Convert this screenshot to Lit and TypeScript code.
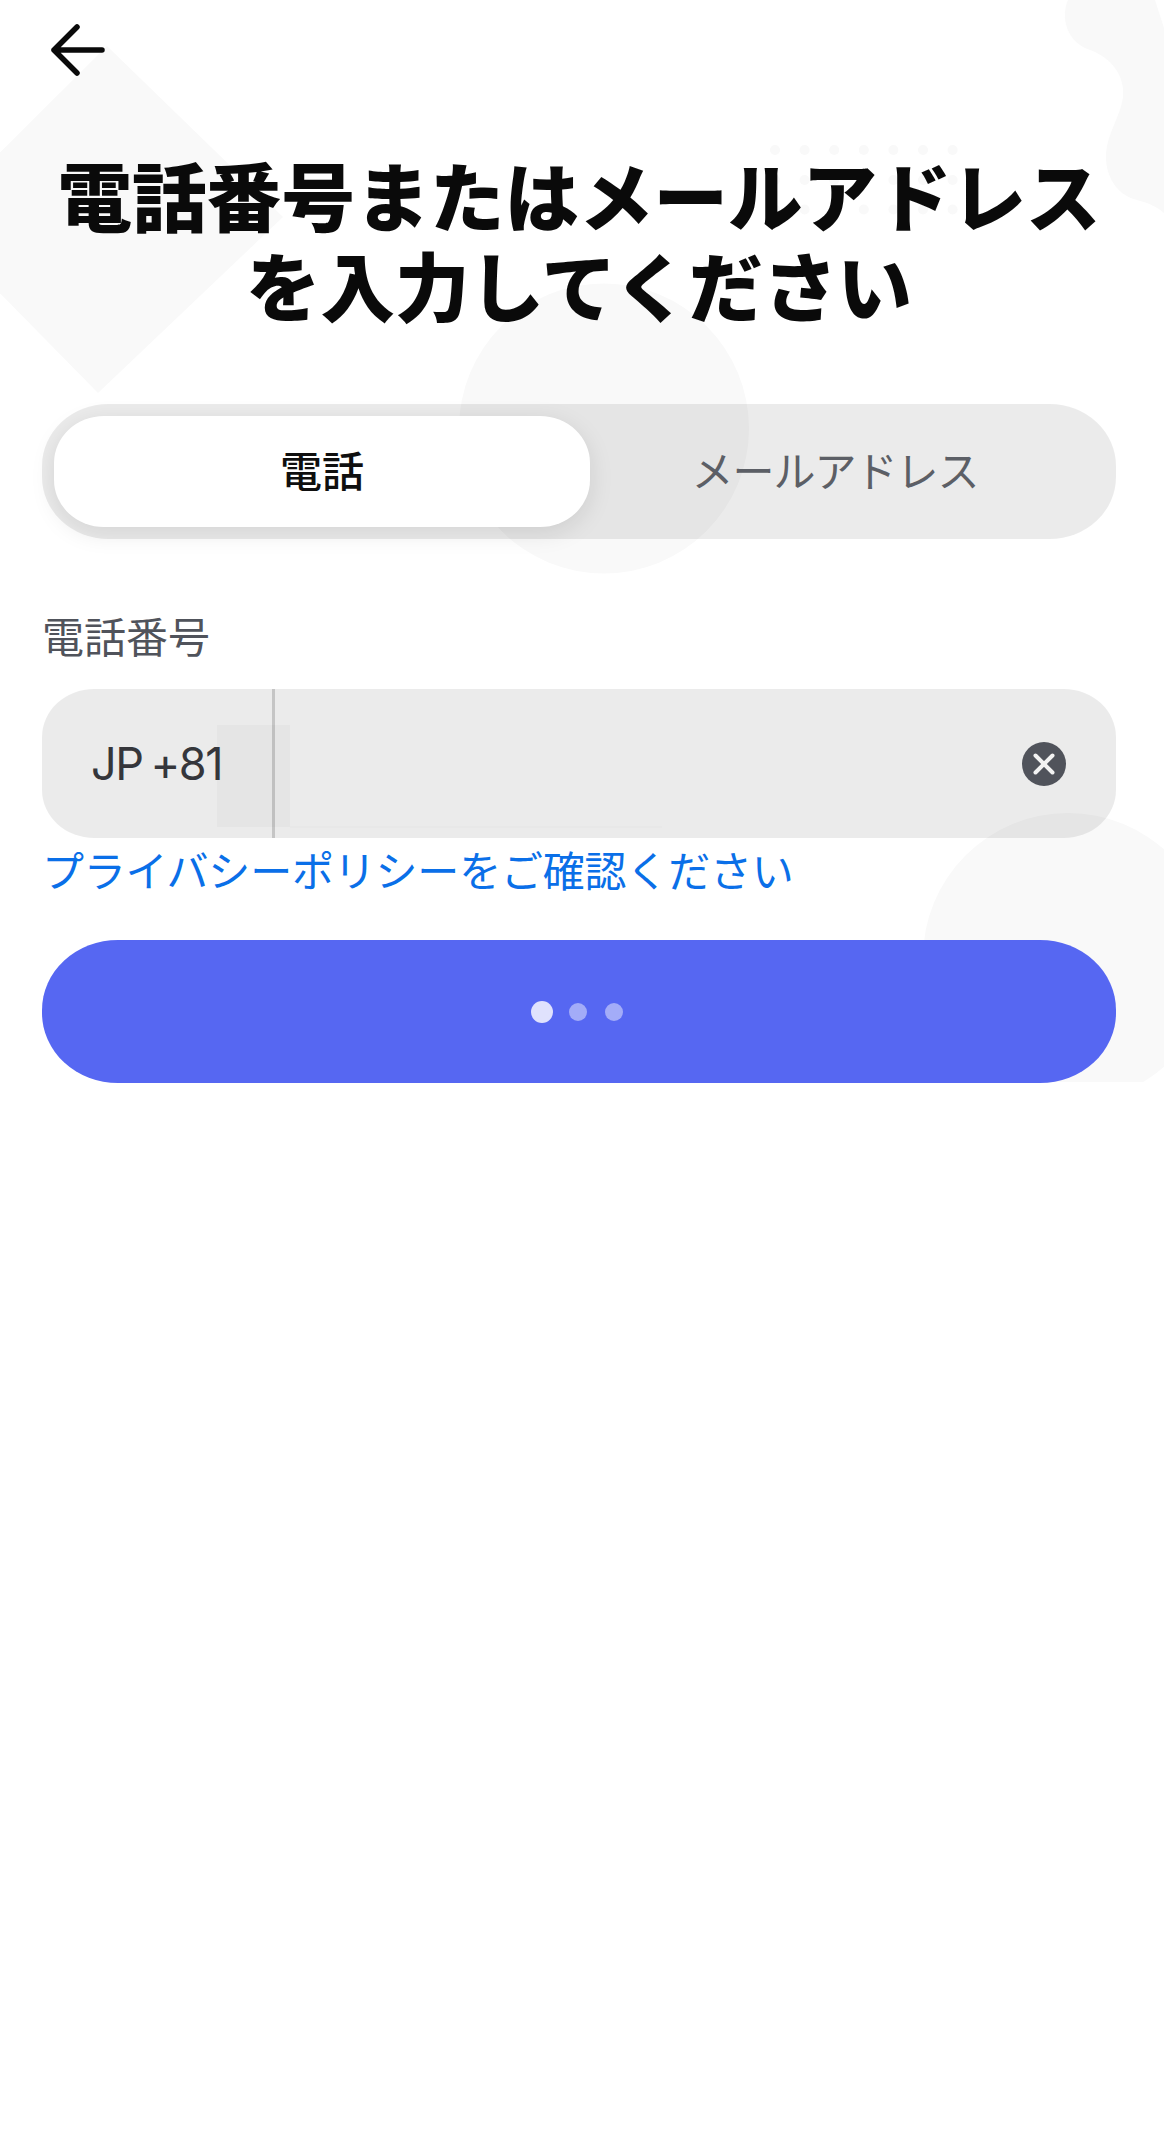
import { LitElement, css, html, svg } from 'lit'
import { customElement, state } from 'lit/decorators.js'

const DOT_COLS = [775, 804.6, 834.2, 863.8, 893.4, 923, 952.6]
const DOT_ROWS = [150, 180, 209.5]

@customElement('app-root')
export class AppRoot extends LitElement {
  @state() private tab: 'phone' | 'email' = 'phone'

  static styles = css`
    :host {
      display: block;
      background: #fff;
      font-family: 'Noto Sans CJK JP', 'Noto Sans', sans-serif;
    }

    .page {
      position: relative;
      min-height: 2149px;
      box-sizing: border-box;
      padding: 18px 48px 0 42px;
    }

    /* decorative shapes sit under the translucent controls */
    .deco {
      position: absolute;
      top: 0;
      left: 0;
      width: 1164px;
      height: 1082px;
    }

    .content {
      position: relative;
    }

    .back {
      display: block;
      width: 64px;
      height: 64px;
      padding: 0;
      border: 0;
      background: none;
    }

    .back svg {
      display: block;
    }

    h1 {
      margin: 67px 0 0;
      font-size: 74.5px;
      line-height: 90px;
      font-weight: 900;
      text-align: center;
      color: #0a0a0a;
    }

    .segment {
      display: flex;
      box-sizing: border-box;
      height: 135px;
      margin-top: 75px;
      padding: 12px 36px 12px 12px;
      border-radius: 66px / 62px;
      background: rgba(0, 0, 0, 0.08);
    }

    .tab {
      display: flex;
      align-items: center;
      justify-content: center;
      padding: 0 0 6px;
      border: 0;
      background: none;
      font: inherit;
      font-size: 42px;
      letter-spacing: -1px;
      color: #5c5f66;
      flex: 1;
    }

    .tab.active {
      flex: 0 0 536px;
      border-radius: 50px / 47px;
      background: #fff;
      color: #0f0f0f;
      font-weight: 500;
      letter-spacing: 0;
      box-shadow: 0 6px 24px rgba(0, 0, 0, 0.1);
    }

    .label {
      margin-top: 71px;
      font-size: 42px;
      line-height: 50px;
      color: #50535b;
    }

    .field {
      display: flex;
      align-items: center;
      height: 149px;
      margin-top: 29px;
      border-radius: 52px / 48px;
      background: rgba(0, 0, 0, 0.08);
    }

    .prefix {
      box-sizing: border-box;
      width: 230px;
      padding-left: 49px;
      font-family: Inter, 'Noto Sans CJK JP', sans-serif;
      font-size: 45px;
      letter-spacing: -1.5px;
      word-spacing: -3px;
      color: #35363b;
    }

    .divider {
      align-self: stretch;
      width: 3px;
      background: rgba(0, 0, 0, 0.16);
    }

    .spacer {
      flex: 1;
    }

    .clear {
      display: block;
      margin-right: 50px;
    }

    .link {
      display: block;
      margin-top: 6px;
      font-size: 42px;
      line-height: 50px;
      letter-spacing: -0.2px;
      color: #0a6fe8;
      text-decoration: none;
    }

    .submit {
      display: flex;
      align-items: center;
      justify-content: center;
      gap: 18px;
      width: 100%;
      height: 143px;
      margin-top: 46px;
      padding: 0;
      border: 0;
      border-radius: 76px / 70px;
      background: #5667f2;
    }

    .dot {
      width: 18px;
      height: 18px;
      border-radius: 50%;
      background: #a3acf8;
    }

    .dot.big {
      width: 22px;
      height: 22px;
      margin-right: -2px;
      margin-left: -4px;
      background: #e0e2fd;
    }
  `

  private renderDeco() {
    return html`
      <svg class="deco" width="1164" height="1082" viewBox="0 0 1164 1082" fill="#f9f9f9">
        <polygon points="107,46 283,217 98,393 -70,222" />
        <circle cx="604" cy="428.500" r="145" />
        <circle cx="1068" cy="958" r="145" />
        <path
          d="M1068 0C1061 16 1065 41 1090 50C1112 58 1125 76 1123 97C1120 118 1106 135 1106 157C1106 180 1120 196 1137 200C1149 203 1157 207 1164 213V28L1155 0Z"
        />
        ${DOT_ROWS.map((cy) =>
          DOT_COLS.map((cx) => svg`<circle cx=${cx} cy=${cy} r="5" />`)
        )}
        <rect x="217" y="725" width="73" height="102" />
        <rect x="290" y="826.500" width="372" height="1" />
      </svg>
    `
  }

  render() {
    return html`
      <div class="page">
        ${this.renderDeco()}
        <div class="content">
          <button class="back" aria-label="戻る">
            <svg width="64" height="64" viewBox="0 0 64 64" fill="none" stroke="#0a0a0a" stroke-width="5.500" stroke-linecap="round" stroke-linejoin="round">
              <path d="M60 32H12M35 9 12 32l23 23" />
            </svg>
          </button>

          <h1>電話番号またはメールアドレスを入力してください</h1>

          <div class="segment">
            <button class="tab ${this.tab === 'phone' ? 'active' : ''}" @click=${() => (this.tab = 'phone')}>電話</button>
            <button class="tab ${this.tab === 'email' ? 'active' : ''}" @click=${() => (this.tab = 'email')}>メールアドレス</button>
          </div>

          <div class="label">電話番号</div>
          <div class="field">
            <span class="prefix">JP +81</span>
            <span class="divider"></span>
            <span class="spacer"></span>
            <svg class="clear" width="44" height="44" viewBox="0 0 44 44">
              <circle cx="22" cy="22" r="22" fill="#50535b" />
              <path d="M13.500 13.500l17 17M30.500 13.500l-17 17" stroke="#f2f2f2" stroke-width="4" stroke-linecap="round" />
            </svg>
          </div>

          <a class="link" href="#">プライバシーポリシーをご確認ください</a>

          <button class="submit" aria-label="読み込み中">
            <span class="dot big"></span>
            <span class="dot"></span>
            <span class="dot"></span>
          </button>
        </div>
      </div>
    `
  }
}
